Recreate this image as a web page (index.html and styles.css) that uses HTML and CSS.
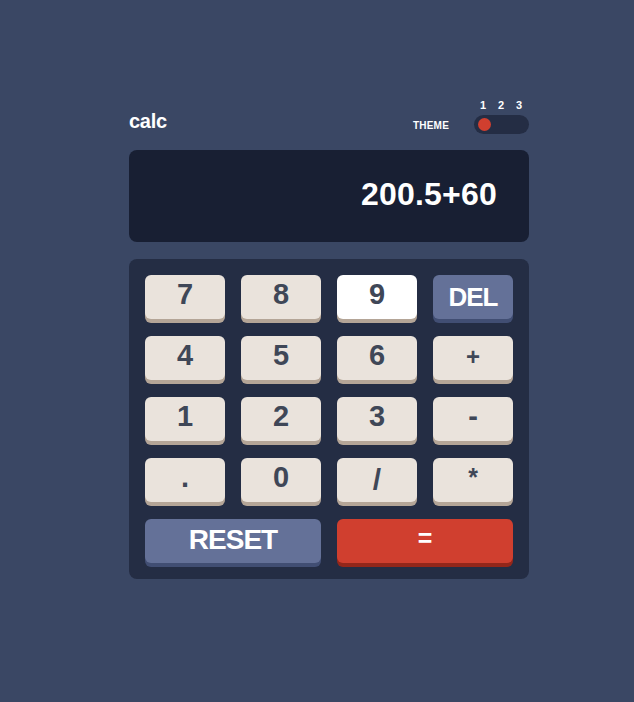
FILE: index.html
```html
<!DOCTYPE html>
<html lang="en">
<head>
<meta charset="utf-8">
<title>calc</title>
<link rel="stylesheet" href="styles.css">
</head>
<body>
<main class="page">
  <div class="calc">
    <header class="header">
      <h1 class="logo">calc</h1>
      <div class="theme">
        <span class="theme-label">THEME</span>
        <div class="theme-switch">
          <div class="theme-nums"><span>1</span><span>2</span><span>3</span></div>
          <div class="toggle"><span class="knob"></span></div>
        </div>
      </div>
    </header>
    <section class="screen">200.5+60</section>
    <section class="keypad">
      <button class="key">7</button>
      <button class="key">8</button>
      <button class="key key-hover">9</button>
      <button class="key key-blue key-del">DEL</button>
      <button class="key">4</button>
      <button class="key">5</button>
      <button class="key">6</button>
      <button class="key key-plus">+</button>
      <button class="key">1</button>
      <button class="key">2</button>
      <button class="key">3</button>
      <button class="key key-minus">-</button>
      <button class="key">.</button>
      <button class="key">0</button>
      <button class="key key-slash">/</button>
      <button class="key key-star">*</button>
      <button class="key key-blue key-wide key-reset">RESET</button>
      <button class="key key-red key-wide key-eq">=</button>
    </section>
  </div>
</main>
</body>
</html>
```
FILE: styles.css
```css
* { box-sizing: border-box; }
html, body {
  margin: 0;
  padding: 0;
  background: #3a4764;
  font-family: "Liberation Sans", Arial, sans-serif;
  font-weight: 700;
  color: #ffffff;
}
.page {
  padding: 99px 0 0 129px;
}
.calc {
  width: 400px;
}
.header {
  display: flex;
  justify-content: space-between;
  align-items: flex-end;
  margin-bottom: 16px;
}
.logo {
  margin: 0 0 3px 0;
  font-size: 20px;
  line-height: 20px;
  font-weight: 700;
  letter-spacing: -0.3px;
}
.theme {
  display: flex;
  align-items: flex-end;
  gap: 25px;
}
.theme-label {
  font-size: 10px;
  line-height: 10px;
  padding-bottom: 3px;
  letter-spacing: 0.2px;
}
.theme-switch {
  display: flex;
  flex-direction: column;
  gap: 4px;
  width: 55px;
}
.theme-nums {
  display: flex;
  justify-content: space-between;
  padding: 0 7px 0 6px;
  font-size: 11px;
  line-height: 12px;
}
.toggle {
  height: 19px;
  border-radius: 10px;
  background: #242d44;
  padding: 3px 4px;
  display: flex;
  align-items: center;
}
.knob {
  width: 13px;
  height: 13px;
  border-radius: 50%;
  background: #d03f2f;
}
.screen {
  height: 92px;
  background: #181f33;
  border-radius: 8px;
  padding: 28px 32px 0 0;
  text-align: right;
  font-size: 32px;
  line-height: 32px;
  letter-spacing: 0.2px;
}
.keypad {
  margin-top: 17px;
  background: #242d44;
  border-radius: 8px;
  padding: 16px;
  display: grid;
  grid-template-columns: repeat(4, 80px);
  grid-auto-rows: 44px;
  column-gap: 16px;
  row-gap: 17px;
}
.key {
  border: 0;
  margin: 0;
  height: 44px;
  border-radius: 6px;
  background: #eae3dc;
  box-shadow: 0 4px 0 #b4a597;
  color: #3f4757;
  font-family: "Liberation Sans", Arial, sans-serif;
  font-weight: 700;
  font-size: 29px;
  line-height: 1;
  display: flex;
  align-items: center;
  justify-content: center;
  padding: 0 0 5px 0;
}
.key-hover {
  background: #ffffff;
}
.key-blue {
  background: #647198;
  box-shadow: 0 4px 0 #414e73;
  color: #ffffff;
}
.key-red {
  background: #d03f2f;
  box-shadow: 0 4px 0 #93261a;
  color: #ffffff;
  padding-bottom: 4px;
}
.key-wide {
  grid-column: span 2;
}
.key-del {
  font-size: 26px;
  letter-spacing: -1px;
  padding-bottom: 1px;
}
.key-reset {
  font-size: 28px;
  letter-spacing: -1px;
  padding-bottom: 3px;
}
.key-eq {
  font-size: 25px;
  padding-bottom: 6px;
}
.key-plus {
  font-size: 24px;
  padding-bottom: 3px;
}
.key-minus {
  font-size: 29px;
}
.key-star {
  font-size: 25px;
}
.key-slash {
  font-size: 30px;
  padding-bottom: 1px;
}
```
